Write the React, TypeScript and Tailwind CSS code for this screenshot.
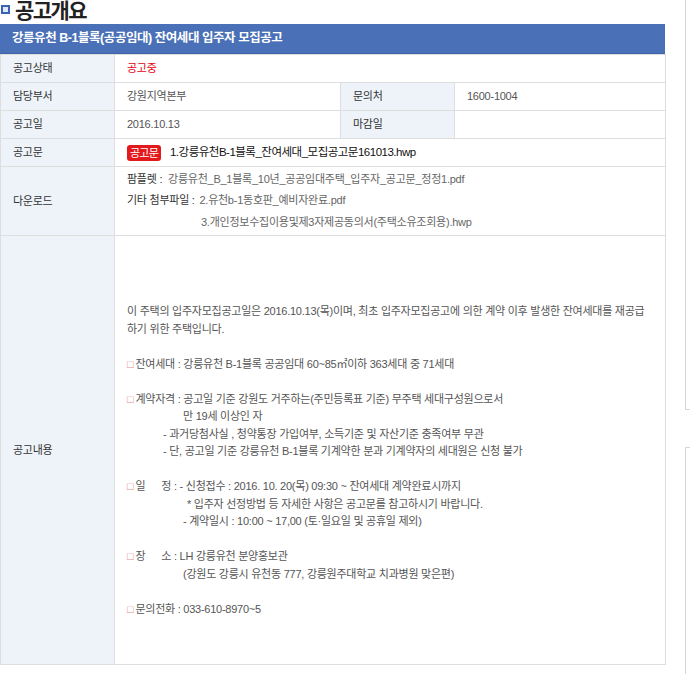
// 공고개요 — 임대주택 공고 상세 (정적 화면)
const FONT = "[font-family:'Liberation_Sans','Noto_Sans_CJK_KR',sans-serif]";

const th = "bg-[#eef3fa] border border-[#dedede] pl-[12px] text-left font-normal text-[#333] align-middle";
const td = "border border-[#dedede] pl-[12px] text-[#555] align-middle";

function Box() {
  return <span className="text-[#e58a8a] mr-[2px]">□</span>;
}

export default function App() {
  return (
    <div className={`${FONT} bg-white w-[690px] h-[674px] overflow-hidden flex text-[11px] tracking-[-0.25px]`}>
      <div className="w-[665px] shrink-0">
        {/* ── Title ── */}
        <div className="h-[24px] flex items-start gap-[5px]">
          <span className="ml-[1px] mt-[5px] w-[9px] h-[9px] border-2 border-[#3a63b8] bg-[#dfe8f7]" />
          <h1 className="text-[21px] leading-[21px] font-bold text-[#222] tracking-[-1.6px]">공고개요</h1>
        </div>

        {/* ── Header bar ── */}
        <div className="h-[30px] bg-[#4a70b7] border-b border-[#3f63a6] flex items-center pl-[12px]">
          <span className="text-white font-bold text-[12.5px] tracking-[-0.45px]">
            강릉유천 B-1블록(공공임대) 잔여세대 입주자 모집공고
          </span>
        </div>

        {/* ── Table ── */}
        <table className="w-[665px] table-fixed border-collapse">
          <colgroup>
            <col className="w-[114px]" />
            <col className="w-[226px]" />
            <col className="w-[114px]" />
            <col className="w-[211px]" />
          </colgroup>
          <tbody>
            <tr className="h-[28px]">
              <th className={th}>공고상태</th>
              <td className={`${td} text-[#e60012]`} colSpan={3}>공고중</td>
            </tr>
            <tr className="h-[28px]">
              <th className={th}>담당부서</th>
              <td className={td}>강원지역본부</td>
              <th className={th}>문의처</th>
              <td className={td}>1600-1004</td>
            </tr>
            <tr className="h-[28px]">
              <th className={th}>공고일</th>
              <td className={td}>2016.10.13</td>
              <th className={th}>마감일</th>
              <td className={td}></td>
            </tr>
            <tr className="h-[28px]">
              <th className={th}>공고문</th>
              <td className={`${td} pl-[8px]`} colSpan={3}>
                <div className="flex items-center gap-[9px] whitespace-nowrap">
                  <span className="bg-[#e3191c] text-white rounded-[3px] px-[3px] h-[16px] leading-[16px] text-[11px] tracking-[-0.8px]">
                    공고문
                  </span>
                  <span className="text-[#111] text-[11.5px] tracking-[-0.5px]">1.강릉유천B-1블록_잔여세대_모집공고문161013.hwp</span>
                </div>
              </td>
            </tr>
            <tr className="h-[69px]">
              <th className={th}>다운로드</th>
              <td className={`${td} pl-[8px]`} colSpan={3}>
                <div className="flex flex-col gap-[4px] whitespace-nowrap leading-[17.5px]">
                  <div>
                    <span className="text-[#333]">팜플렛 : </span>
                    <span className="ml-[3px] text-[#666]">강릉유천_B_1블록_10년_공공임대주택_입주자_공고문_정정1.pdf</span>
                  </div>
                  <div>
                    <span className="text-[#333]">기타 첨부파일 : </span>
                    <span className="ml-[2px] text-[#666]">2.유천b-1동호판_예비자완료.pdf</span>
                  </div>
                  <div className="pl-[74px] text-[#666]">3.개인정보수집이용및제3자제공동의서(주택소유조회용).hwp</div>
                </div>
              </td>
            </tr>
            <tr className="h-[429px]">
              <th className={th}>공고내용</th>
              <td className={`${td} align-top pt-[67px]`} colSpan={3}>
                <div className="leading-[17.5px] whitespace-nowrap text-[#555]">
                  <div>이 주택의 입주자모집공고일은 2016.10.13(목)이며, 최초 입주자모집공고에 의한 계약 이후 발생한 잔여세대를 재공급</div>
                  <div>하기 위한 주택입니다.</div>
                  <div className="h-[17.5px]" />
                  <div><Box />잔여세대 : 강릉유천 B-1블록 공공임대 60~85㎡이하 363세대 중 71세대</div>
                  <div className="h-[17.5px]" />
                  <div><Box />계약자격 : 공고일 기준 강원도 거주하는(주민등록표 기준) 무주택 세대구성원으로서</div>
                  <div className="pl-[56px]">만 19세 이상인 자</div>
                  <div className="pl-[36px]">- 과거당첨사실 , 청약통장 가입여부, 소득기준 및 자산기준 충족여부 무관</div>
                  <div className="pl-[36px]">- 단, 공고일 기준 강릉유천 B-1블록 기계약한 분과 기계약자의 세대원은 신청 불가</div>
                  <div className="h-[17.5px]" />
                  <div>
                    <Box />일<span className="inline-block w-[16px]" />정 : - 신청접수 : 2016. 10. 20(목) 09:30 ~ 잔여세대 계약완료시까지
                  </div>
                  <div className="pl-[60px]">* 입주자 선정방법 등 자세한 사항은 공고문를 참고하시기 바랍니다.</div>
                  <div className="pl-[56px]">- 계약일시 : 10:00 ~ 17,00 (토·일요일 및 공휴일 제외)</div>
                  <div className="h-[17.5px]" />
                  <div>
                    <Box />장<span className="inline-block w-[16px]" />소 : LH 강릉유천 분양홍보관
                  </div>
                  <div className="pl-[56px]">(강원도 강릉시 유천동 777, 강릉원주대학교 치과병원 맞은편)</div>
                  <div className="h-[17.5px]" />
                  <div><Box />문의전화 : 033-610-8970~5</div>
                </div>
              </td>
            </tr>
          </tbody>
        </table>
      </div>

      {/* ── Right rail edges ── */}
      <div className="ml-[20px] w-[5px] flex flex-col">
        <div className="h-[410px] border-l border-b border-[#d6d6d6]" />
        <div className="mt-[37px] flex-1 border-l border-t border-[#d6d6d6]" />
      </div>
    </div>
  );
}
